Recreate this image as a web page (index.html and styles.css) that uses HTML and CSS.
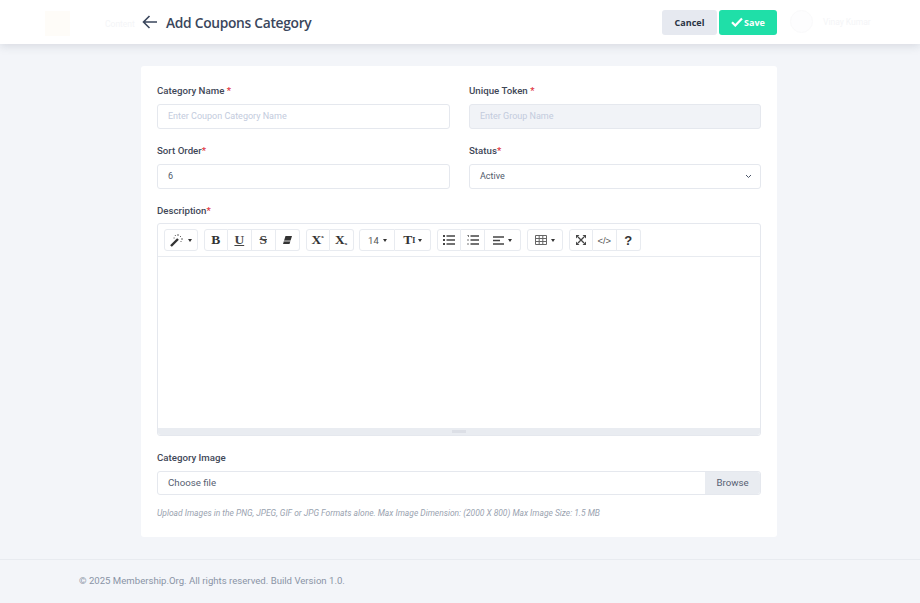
FILE: index.html
```html
<!DOCTYPE html>
<html lang="en">
<head>
  <meta charset="UTF-8">
  <title>Add Coupons Category</title>
  <link rel="stylesheet" href="styles.css">
</head>
<body>
  <header class="topbar">
    <div class="ghost-left">
      <div class="ghost-logo"></div>
      <span class="ghost-text">Content</span>
    </div>
    <div class="page-head">
      <svg class="back" width="16" height="14" viewBox="0 0 16 14"><path d="M15 7H2M7.500 1 1.500 7l6 6" fill="none" stroke="#3a465c" stroke-width="1.600"/></svg>
      <h1>Add Coupons Category</h1>
    </div>
    <div class="actions">
      <button class="btn btn-cancel">Cancel</button>
      <button class="btn btn-save">
        <svg width="12" height="10" viewBox="0 0 12 10"><path d="M1 5.200 4.300 8.500 11 1.500" fill="none" stroke="#fff" stroke-width="2.200"/></svg>
        Save
      </button>
    </div>
    <div class="ghost-right">
      <div class="ghost-avatar"></div>
      <span class="ghost-text">Vinay Kumar</span>
    </div>
  </header>

  <main class="content">
    <form class="card">
      <div class="row">
        <div class="field">
          <label>Category Name <i>*</i></label>
          <div class="input placeholder">Enter Coupon Category Name</div>
        </div>
        <div class="field">
          <label>Unique Token <i>*</i></label>
          <div class="input placeholder disabled">Enter Group Name</div>
        </div>
      </div>
      <div class="row">
        <div class="field">
          <label>Sort Order<i>*</i></label>
          <div class="input">6</div>
        </div>
        <div class="field">
          <label>Status<i>*</i></label>
          <div class="input select">Active
            <svg width="7" height="5" viewBox="0 0 7 5"><path d="M1 1l2.500 2.500L6 1" fill="none" stroke="#4a5568" stroke-width="1"/></svg>
          </div>
        </div>
      </div>
      <div class="field">
        <label>Description<i>*</i></label>
        <div class="editor">
          <div class="toolbar">
            <div class="tool-group">
              <button type="button" class="tool wide wand">
                <svg width="14" height="14" viewBox="0 0 14 14"><path d="M1 13 8 6" stroke="#333" stroke-width="2.400"/><path d="M8 1v2M11 3l-1 1M13 6h-2M11.500 9 10.500 8M5 2l.7 1M3.500 5h1.200" stroke="#666" stroke-width="1"/></svg>
                <span class="caret"></span>
              </button>
            </div>
            <div class="tool-group">
              <button type="button" class="tool glyph b">B</button>
              <button type="button" class="tool glyph u">U</button>
              <button type="button" class="tool glyph s">S</button>
              <button type="button" class="tool">
                <svg width="11" height="10" viewBox="0 0 11 10"><path d="M3.500 1H10L7.500 9H1z" fill="#333"/><path d="M2 6h7" stroke="#fff" stroke-width=".8"/></svg>
              </button>
            </div>
            <div class="tool-group">
              <button type="button" class="tool glyph b script">X<sup>x</sup></button>
              <button type="button" class="tool glyph b script">X<sub>x</sub></button>
            </div>
            <div class="tool-group">
              <button type="button" class="tool wide size">14 <span class="caret"></span></button>
              <button type="button" class="tool wide glyph b lh">T<span class="lh-mark">I</span> <span class="caret"></span></button>
            </div>
            <div class="tool-group">
              <button type="button" class="tool">
                <svg width="12" height="10" viewBox="0 0 12 10"><path d="M0 1h2M0 5h2M0 9h2" stroke="#444" stroke-width="1.800"/><path d="M3.500 1H12M3.500 5H12M3.500 9H12" stroke="#444" stroke-width="1.500"/></svg>
              </button>
              <button type="button" class="tool">
                <svg width="12" height="10" viewBox="0 0 12 10"><path d="M0.500 0h1v2M0 5h2M0 9h2" stroke="#777" stroke-width="1"/><path d="M3.500 1H12M3.500 5H12M3.500 9H12" stroke="#444" stroke-width="1.700"/></svg>
              </button>
              <button type="button" class="tool wide">
                <svg width="11" height="9" viewBox="0 0 11 9"><path d="M0 1h11M0 4.500h7M0 8h11" stroke="#444" stroke-width="1.400"/></svg>
                <span class="caret"></span>
              </button>
            </div>
            <div class="tool-group">
              <button type="button" class="tool wide">
                <svg width="12" height="10" viewBox="0 0 12 10"><path d="M.5.500h11v9H.5zM4.200.500v9M7.800.500v9M.5 3.500h11M.5 6.500h11" fill="none" stroke="#666" stroke-width="1"/></svg>
                <span class="caret"></span>
              </button>
            </div>
            <div class="tool-group">
              <button type="button" class="tool">
                <svg width="10" height="10" viewBox="0 0 10 10"><path d="M2 2l6 6M8 2 2 8" stroke="#444" stroke-width="1.300"/><path d="M0 3.500V0h3.500L0 3.500zM10 3.500V0H6.500L10 3.500zM0 6.500V10h3.500L0 6.500zM10 6.500V10H6.500L10 6.500z" fill="#444"/></svg>
              </button>
              <button type="button" class="tool code">&lt;/&gt;</button>
              <button type="button" class="tool glyph help">?</button>
            </div>
          </div>
          <div class="editor-area"></div>
          <div class="statusbar"><span class="grip"></span></div>
        </div>
      </div>
      <div class="field">
        <label>Category Image</label>
        <div class="file-input">
          <span class="file-name">Choose file</span>
          <span class="file-browse">Browse</span>
        </div>
        <p class="hint">Upload Images in the PNG, JPEG, GIF or JPG Formats alone. Max Image Dimension: (2000 X 800) Max Image Size: 1.5 MB</p>
      </div>
    </form>
  </main>

  <footer class="footer">© 2025 Membership.Org. All rights reserved. Build Version 1.0.</footer>
</body>
</html>
```

FILE: styles.css
```css
* { box-sizing: border-box; }
html, body {
  margin: 0;
  height: 603px;
  overflow: hidden;
  background: #f3f5f9;
  font-family: Roboto, "Liberation Sans", sans-serif;
  color: #3f4a5a;
}
button { font-family: inherit; }

/* Header */
.topbar {
  height: 44px;
  background: #fff;
  box-shadow: 0 2px 9px #2f3b5226;
  display: flex;
  align-items: center;
  position: relative;
  padding-left: 142px;
  padding-right: 143px;
}
.ghost-left {
  position: absolute;
  left: 45px;
  top: 11px;
  display: flex;
  align-items: center;
  gap: 35px;
}
.ghost-logo { width: 25px; height: 25px; background: #fefcf8; }
.ghost-text { font-size: 8.500px; color: #f4f5f7; }
.ghost-right {
  position: absolute;
  left: 790px;
  top: 10px;
  display: flex;
  align-items: center;
  gap: 10px;
}
.ghost-avatar { width: 23px; height: 23px; border-radius: 50%; background: #fdfdfe; border: 1px solid #fafafb; }
.page-head { display: flex; align-items: center; gap: 8px; flex: 1; }
.page-head h1 {
  margin: 0;
  font-family: "Open Sans", sans-serif;
  font-size: 13.800px;
  font-weight: 600;
  color: #3a465c;
  letter-spacing: -.3px;
}
.actions { display: flex; gap: 2px; }
.btn {
  height: 25px;
  border: 0;
  border-radius: 3px;
  font-size: 9px;
  font-weight: 700;
  font-family: "Open Sans", sans-serif;
}
.btn-cancel { width: 55px; background: #e6e9f0; color: #2a3344; }
.btn-save {
  width: 58px;
  background: #1fdfa8;
  color: #fff;
  display: flex;
  align-items: center;
  justify-content: center;
  gap: 1px;
}

/* Form card */
.content { padding: 22px 143px 0 141px; }
.card {
  height: 471px;
  background: #fff;
  border-radius: 3px;
  padding: 18px 16px 0;
  display: flex;
  flex-direction: column;
  gap: 15px;
}
.row { display: grid; grid-template-columns: 293px 292px; gap: 19px; }
.field label {
  display: block;
  font-size: 9.700px;
  font-weight: 500;
  line-height: 14px;
  margin-bottom: 6px;
  color: #3f4858;
}
.field label i { color: #e0323c; font-style: normal; }
.input {
  height: 25px;
  border: 1px solid #e5e8ee;
  border-radius: 3px;
  padding: 0 10px;
  font-size: 9px;
  line-height: 23px;
  color: #4f5a6b;
}
.placeholder { color: #c3cbdd; }
.disabled { background: #f1f3f7; }
.select { display: flex; justify-content: space-between; align-items: center; padding-right: 8px; }

/* Editor */
.editor {
  height: 213px;
  margin-top: -1px;
  border: 1px solid #e5e8ee;
  border-radius: 3px;
  display: flex;
  flex-direction: column;
}
.toolbar {
  height: 33px;
  flex: none;
  display: flex;
  gap: 5.800px;
  padding: 5px 0 0 6px;
  border-bottom: 1px solid #e8ebf0;
}
.tool-group { display: flex; height: 22px; }
.tool {
  width: 24px;
  height: 22px;
  padding: 0;
  background: #fff;
  border: 1px solid #e8ebf0;
  border-left-width: 0;
  color: #333;
  display: flex;
  align-items: center;
  justify-content: center;
  gap: 4px;
  font-size: 10px;
}
.tool:first-child { border-left-width: 1px; border-radius: 3px 0 0 3px; }
.tool:last-child { border-radius: 0 3px 3px 0; }
.tool:only-child { border-radius: 3px; }
.tool.wide { width: 36px; }
.tool.wand { width: 34px; }
.caret {
  display: inline-block;
  width: 0;
  height: 0;
  border: 2.500px solid transparent;
  border-top: 3px solid #333;
  border-bottom: 0;
}
.glyph { font-family: "Liberation Serif", serif; font-size: 13.500px; }
.b { font-weight: 700; }
.u { font-weight: 700; text-decoration: underline; color: #444; }
.s { font-weight: 700; text-decoration: line-through; color: #444; }
.script { gap: 0; }
.tool sup, .tool sub { font-size: 5px; line-height: 0; }
.tool sup { margin-top: -6px; }
.tool sub { margin-top: 7px; }
.size { font-family: Roboto, sans-serif; font-size: 9.500px; color: #555; }
.lh { gap: 3px; }
.lh-mark { font-size: 8px; margin-left: -3px; }
.code { font-family: "Liberation Sans", sans-serif; font-size: 9.500px; color: #555; }
.help { font-family: "Liberation Sans", sans-serif; font-weight: 700; font-size: 13px; }
.editor-area { flex: 1; }
.statusbar {
  height: 7px;
  flex: none;
  background: #e9ecf1;
  border-radius: 0 0 3px 3px;
  display: flex;
  justify-content: center;
  align-items: center;
}
.grip { width: 14px; height: 3px; background: #dcdfe6; }

/* File input */
.file-input {
  height: 24px;
  margin-top: 3px;
  display: flex;
  border: 1px solid #e5e8ee;
  border-radius: 3px;
  font-size: 9.700px;
  line-height: 22px;
  color: #566071;
}
.file-name { flex: 1; padding-left: 10px; }
.file-browse { width: 55px; background: #e9ecf1; text-align: center; border-radius: 0 3px 3px 0; }
.hint {
  margin: 12px 0 0;
  font-size: 8.450px;
  line-height: 13px;
  font-style: italic;
  color: #9aa3b0;
}

/* Footer */
.footer {
  margin-top: 22px;
  border-top: 1px solid #e8ebf0;
  padding: 14px 0 0 79px;
  font-size: 9.600px;
  line-height: 14px;
  color: #8a94a6;
}
```
